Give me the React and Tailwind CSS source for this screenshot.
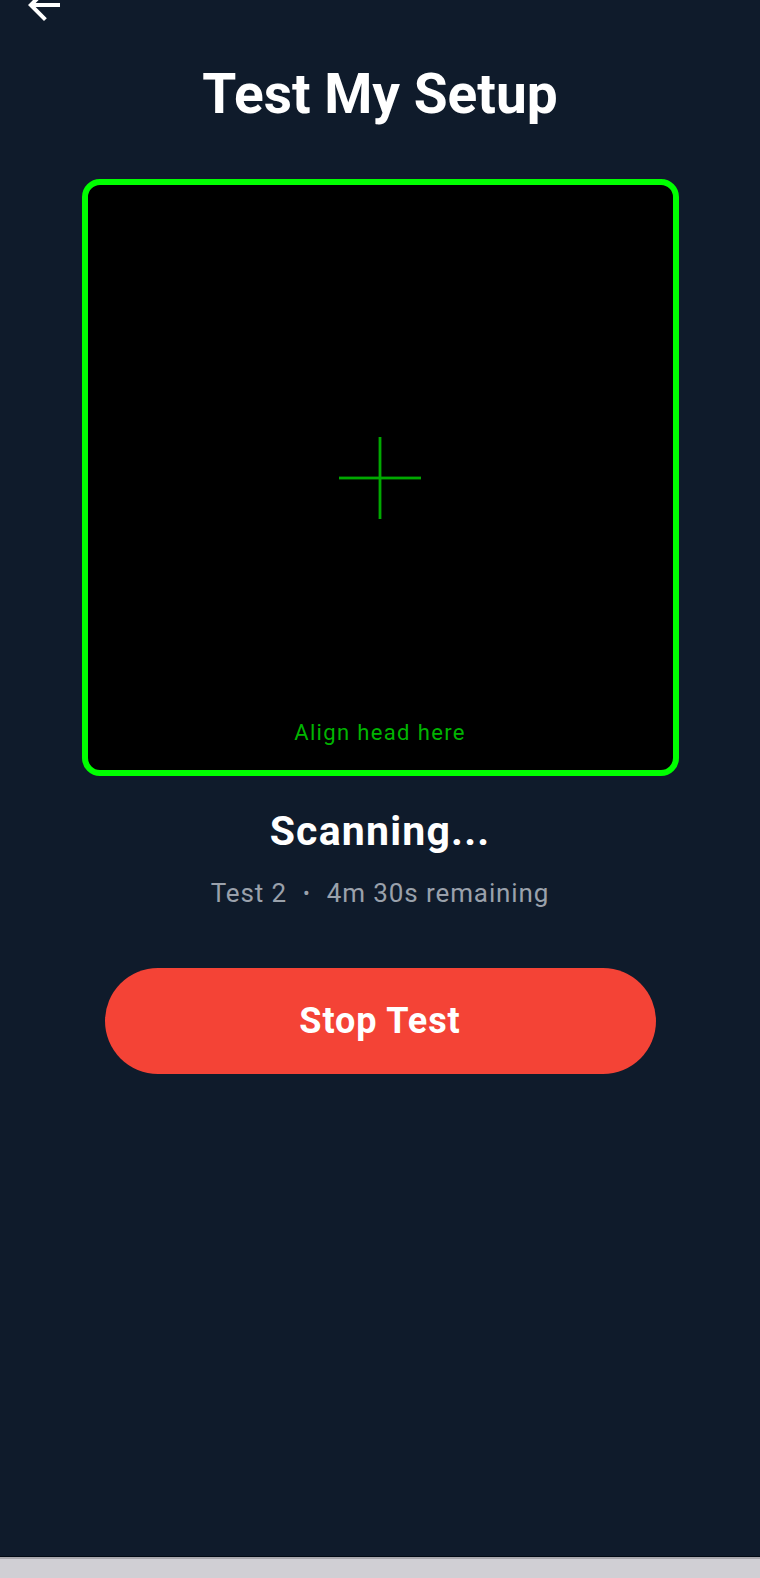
export default function App() {
  return (
    <div
      className="flex h-[1578px] w-full flex-col overflow-hidden bg-[#0f1b2b] text-white"
      style={{ fontFamily: 'Roboto, "Noto Sans", sans-serif' }}
    >
      {/* top bar, scrolled partly out of view */}
      <div className="-mt-[19px] ml-[20px] h-[48px] w-[48px]">
        <svg viewBox="0 0 24 24" className="h-[48px] w-[48px]" fill="#ffffff">
          <path d="M20 11H7.83l5.59-5.59L12 4l-8 8 8 8 1.41-1.41L7.83 13H20v-2z" />
        </svg>
      </div>

      <h1 className="mt-[33px] text-center text-[55px] font-bold leading-[64px]">Test My Setup</h1>

      {/* camera view */}
      <div className="relative mx-auto mt-[53px] h-[597px] w-[597px] rounded-[18px] border-[6px] border-[#00ff00] bg-black">
        <div className="flex h-full w-full items-center justify-center">
          <svg width="82" height="82" viewBox="0 0 82 82">
            <rect x="39.6" y="0" width="2.8" height="82" fill="#00a800" />
            <rect x="0" y="39.6" width="82" height="2.8" fill="#00a800" />
          </svg>
        </div>
        <p className="absolute bottom-[24px] left-0 right-0 text-center text-[22px] leading-[26px] tracking-[1.35px] text-[#00b400]">
          Align head here
        </p>
      </div>

      <h2 className="mt-[31px] text-center text-[41px] font-bold leading-[48px] tracking-[1.2px]">Scanning...</h2>
      <div className="mt-[22px] flex items-center justify-center gap-[16px] text-[26px] leading-[32px] tracking-[0.9px] text-[#9aa1ab]">
        <span>Test 2</span>
        <span className="text-[20px]">•</span>
        <span>4m 30s remaining</span>
      </div>

      <button className="mx-auto mt-[59px] h-[106px] w-[551px] rounded-full bg-[#f44336] text-[36px] font-bold tracking-[0.9px] text-white">
        Stop Test
      </button>

      <div className="flex-1" />
      <div className="h-[22px] border-t-[1px] border-[#020a14] bg-[#d0cfd4]">
        <div className="h-[2px] bg-[#aaa9ae]" />
      </div>
    </div>
  )
}
